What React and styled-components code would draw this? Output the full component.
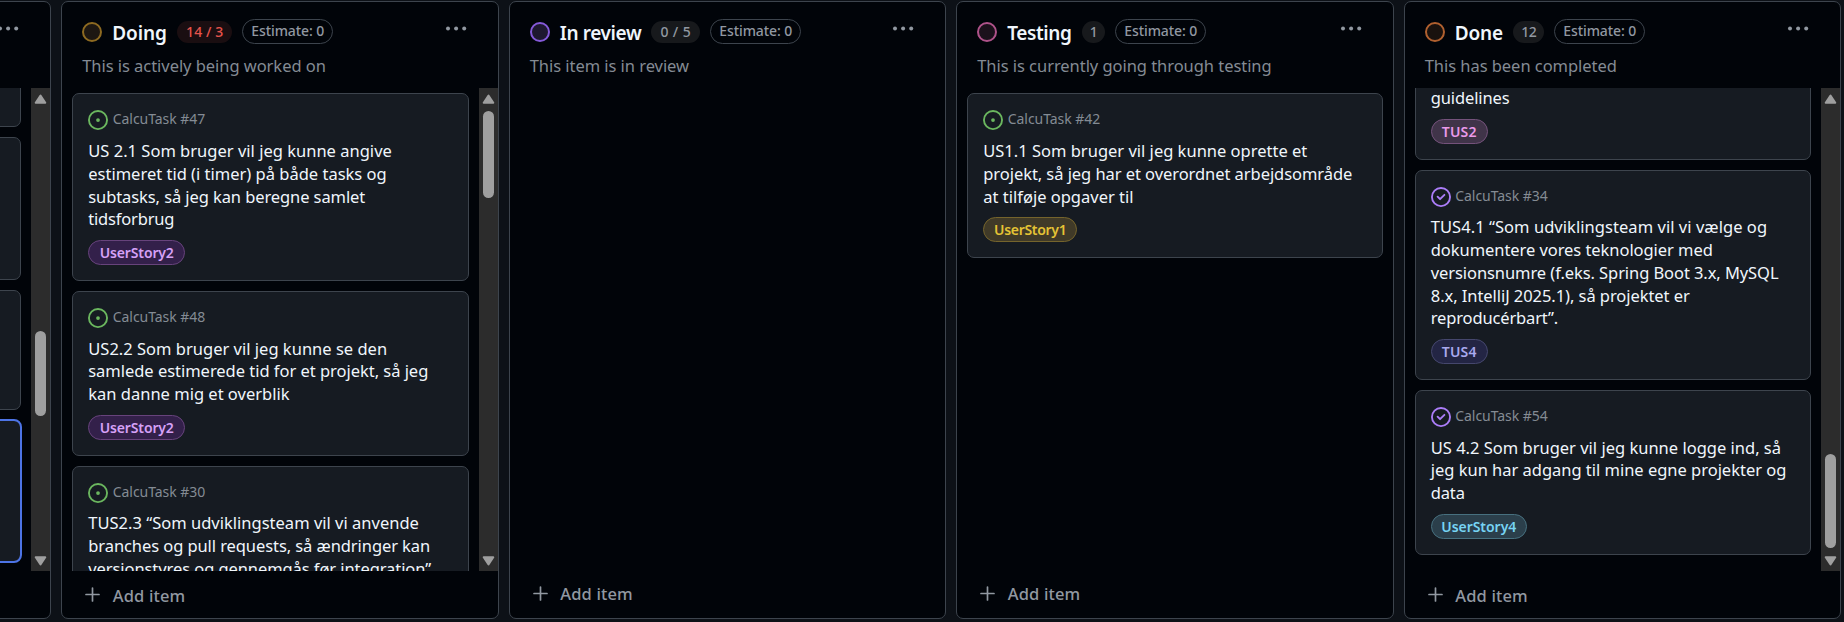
import React from 'react';
import styled, { createGlobalStyle, css } from 'styled-components';

const GlobalStyle = createGlobalStyle`
  * { box-sizing: border-box; }
  html, body { margin: 0; height: 100%; overflow: hidden; background: #0d1117; }
  body { font-family: "Noto Sans", "Open Sans", sans-serif; color: #f0f6fc; }
`;

const Board = styled.main`
  display: flex;
  gap: 10px;
  width: 2300px;
  height: 622px;
  padding: 1px 0 2.6px;
  margin-left: -386.25px;
  overflow: hidden;
`;

const ColumnBox = styled.section`
  display: flex;
  flex-direction: column;
  flex: 0 0 437.5px;
  border: 1px solid #3d444d;
  border-radius: 7px;
  background: #010409;
  overflow: hidden;
`;

const Header = styled.header`
  flex: 0 0 86px;
  padding: 17px 31px 0 20px;
`;

const HeadRow = styled.div`
  display: flex;
  align-items: center;
  height: 25px;
`;

const StatusDot = styled.span`
  width: 20px;
  height: 20px;
  margin: 1px 10px 0 0;
  border: 2px solid ${(p) => p.$ring};
  border-radius: 50%;
  background: ${(p) => p.$fill};
`;

const Title = styled.h2`
  margin: 3px 10px 0 0;
  font-size: 19px;
  font-weight: 600;
  line-height: 26px;
  letter-spacing: ${(p) => p.$track}px;
  width: ${(p) => p.$w}px;
  white-space: nowrap;
`;

const Count = styled.span`
  height: 22px;
  width: ${(p) => p.$w}px;
  margin-right: 10px;
  border-radius: 11px;
  text-align: center;
  font-size: 14px;
  font-weight: 500;
  line-height: 21px;
  letter-spacing: ${(p) => p.$track}px;
  white-space: nowrap;
  color: ${(p) => (p.$over ? '#e5534b' : '#9198a1')};
  background: ${(p) => (p.$over ? '#1a0e11' : '#17191c')};
`;

const Estimate = styled.span`
  height: 25px;
  width: 91px;
  border: 1px solid #3d444d;
  border-radius: 13px;
  text-align: center;
  font-size: 14px;
  font-weight: 500;
  line-height: 22px;
  letter-spacing: -0.1px;
  white-space: nowrap;
  color: #9198a1;
`;

const Menu = styled.svg`
  width: 22px;
  height: 5px;
  margin: -7px 0 0 auto;
  fill: #9198a1;
`;

const Description = styled.p`
  margin: 9.5px 0 0;
  font-size: 16.5px;
  line-height: 23px;
  letter-spacing: -0.05px;
  white-space: nowrap;
  color: #848b94;
`;

const Body = styled.div`
  display: flex;
  flex: 0 0 482.75px;
  overflow: hidden;
`;

const List = styled.div`
  flex: 1;
  display: flex;
  flex-direction: column;
  gap: 10px;
  padding: 5.25px 10px 0;
  overflow: hidden;
`;

const CardBox = styled.article`
  flex: none;
  height: ${(p) => (p.$h ? `${p.$h}px` : 'auto')};
  margin-top: ${(p) => p.$lift || 0}px;
  padding: 15px;
  border: 1px solid #3d444d;
  border-radius: 7px;
  background: #161b22;
  ${(p) => p.$selected && css`
    outline: 2px solid #4d74e6;
    outline-offset: -1px;
  `}
`;

const Repo = styled.div`
  display: flex;
  align-items: center;
  gap: 4.5px;
  height: 20px;
  margin-bottom: 10.75px;
  font-size: 14px;
  letter-spacing: -0.05px;
  color: #848b94;
`;

const RepoName = styled.span`
  margin-top: -1px;
`;

const IssueIcon = styled.svg`
  width: 20px;
  height: 20px;
  margin-top: 2px;
  flex: none;
  fill: ${(p) => p.$color};
`;

const Line = styled.div`
  font-size: 16.5px;
  line-height: 22.75px;
  letter-spacing: ${(p) => p.$track}px;
  white-space: nowrap;
`;

const tones = {
  purple: { text: '#d6a1f7', bg: '#33204a', line: '#67437c' },
  pink: { text: '#ea9aea', bg: '#403449', line: '#74527b' },
  yellow: { text: '#e5c335', bg: '#403a28', line: '#75642c' },
  indigo: { text: '#a9a9ee', bg: '#232544', line: '#45476d' },
  cyan: { text: '#77d4f4', bg: '#2b3f4b', line: '#47707f' },
};

const Label = styled.span`
  display: block;
  width: ${(p) => p.$w}px;
  height: 25px;
  margin-top: 8.75px;
  border: 1px solid ${(p) => tones[p.$tone].line};
  border-radius: 13px;
  text-align: center;
  font-size: 14px;
  font-weight: 600;
  line-height: 24.5px;
  letter-spacing: ${(p) => p.$track}px;
  white-space: nowrap;
  color: ${(p) => tones[p.$tone].text};
  background: ${(p) => tones[p.$tone].bg};
`;

const Track = styled.div`
  display: flex;
  flex-direction: column;
  align-items: center;
  flex: 0 0 19px;
  padding: 6px 0 5px;
  background: #2c2c2c;
`;

const Arrow = styled.svg`
  width: 13px;
  height: 10px;
  flex: none;
  fill: #9f9f9f;
  stroke: #9f9f9f;
  stroke-width: 2;
  stroke-linejoin: round;
`;

const Thumb = styled.div`
  width: 11px;
  height: ${(p) => p.$size}px;
  margin: ${(p) => p.$offset - 16}px 0 auto;
  border-radius: 6px;
  background: #9f9f9f;
`;

const AddItem = styled.footer`
  display: flex;
  align-items: center;
  gap: 12.5px;
  height: 28px;
  margin-top: ${(p) => (p.$raised ? 9 : 10.25)}px;
  padding-left: 23px;
  font-size: 16.5px;
  font-weight: 500;
  letter-spacing: 0.15px;
  color: #9198a1;
`;

const Plus = styled.svg`
  width: 15px;
  height: 15px;
  margin-top: -1px;
  flex: none;
  stroke: #9198a1;
  stroke-width: 1.7;
  stroke-linecap: round;
`;

const AddText = styled.span`
  line-height: 22px;
  margin-top: 1px;
`;

const columns = [
  {
    title: '',
    scroll: [242.7, 85.5],
    cards: [
      { h: 100, lift: -66.5 },
      { h: 143 },
      { h: 120 },
      { h: 142.5, selected: true },
    ],
  },
  {
    title: 'Doing', titleW: 55, track: -0.1, ring: '#8d6a21', fill: '#1d1712',
    count: '14 / 3', over: true, countW: 55, countTrack: 0.1,
    text: 'This is actively being worked on',
    scroll: [23, 87],
    cards: [
      {
        id: 47, label: ['UserStory2', 97, 'purple', -0.14],
        lines: [
          ['US 2.1 Som bruger vil jeg kunne angive', 0.01],
          ['estimeret tid (i timer) på både tasks og', 0],
          ['subtasks, så jeg kan beregne samlet', -0.09],
          ['tidsforbrug', -0.18],
        ],
      },
      {
        id: 48, label: ['UserStory2', 97, 'purple', -0.14],
        lines: [
          ['US2.2 Som bruger vil jeg kunne se den', 0.01],
          ['samlede estimerede tid for et projekt, så jeg', -0.03],
          ['kan danne mig et overblik', 0],
        ],
      },
      {
        id: 30,
        lines: [
          ['TUS2.3 “Som udviklingsteam vil vi anvende', 0.01],
          ['branches og pull requests, så ændringer kan', -0.08],
          ['versionstyres og gennemgås før integration”', -0.08],
        ],
      },
    ],
  },
  {
    title: 'In review', titleW: 81.5, track: -0.37, ring: '#8459d8', fill: '#1e1830',
    count: '0 / 5', countW: 49, countTrack: 0.4, raised: true,
    text: 'This item is in review',
    cards: [],
  },
  {
    title: 'Testing', titleW: 65, track: -0.4, ring: '#ae5289', fill: '#1b111b',
    count: '1', countW: 23, countTrack: 0, raised: true,
    text: 'This is currently going through testing',
    cards: [
      {
        id: 42, label: ['UserStory1', 94, 'yellow', -0.3],
        lines: [
          ['US1.1 Som bruger vil jeg kunne oprette et', 0],
          ['projekt, så jeg har et overordnet arbejdsområde', -0.06],
          ['at tilføje opgaver til', 0],
        ],
      },
    ],
  },
  {
    title: 'Done', titleW: 48.5, track: -0.15, ring: '#b0602f', fill: '#19120e',
    count: '12', countW: 31, countTrack: -0.5,
    text: 'This has been completed',
    scroll: [365.7, 94.5],
    cards: [
      {
        done: true, lift: -22.25, label: ['TUS2', 57, 'pink', 0.2],
        lines: [['guidelines', -0.12]],
      },
      {
        id: 34, done: true, label: ['TUS4', 57, 'indigo', 0.2],
        lines: [
          ['TUS4.1 “Som udviklingsteam vil vi vælge og', 0.05],
          ['dokumentere vores teknologier med', -0.06],
          ['versionsnumre (f.eks. Spring Boot 3.x, MySQL', -0.08],
          ['8.x, IntelliJ 2025.1), så projektet er', -0.06],
          ['reproducérbart”.', -0.15],
        ],
      },
      {
        id: 54, done: true, label: ['UserStory4', 96, 'cyan', -0.04],
        lines: [
          ['US 4.2 Som bruger vil jeg kunne logge ind, så', 0],
          ['jeg kun har adgang til mine egne projekter og', -0.02],
          ['data', -0.15],
        ],
      },
    ],
  },
];

function StateIcon({ done }) {
  return done ? (
    <IssueIcon viewBox="0 0 16 16" $color="#ab7df8">
      <path d="M11.28 6.78a.75.75 0 0 0-1.06-1.06L7.25 8.69 5.78 7.22a.75.75 0 0 0-1.06 1.06l2 2a.75.75 0 0 0 1.06 0l3.5-3.5Z" />
      <path d="M16 8A8 8 0 1 1 0 8a8 8 0 0 1 16 0Zm-1.5 0a6.5 6.5 0 1 0-13 0 6.5 6.5 0 0 0 13 0Z" />
    </IssueIcon>
  ) : (
    <IssueIcon viewBox="0 0 16 16" $color="#6bb75f">
      <path d="M8 9.5a1.5 1.5 0 1 0 0-3 1.5 1.5 0 0 0 0 3Z" />
      <path d="M8 0a8 8 0 1 1 0 16A8 8 0 0 1 8 0ZM1.5 8a6.5 6.5 0 1 0 13 0 6.5 6.5 0 0 0-13 0Z" />
    </IssueIcon>
  );
}

function Card({ card }) {
  return (
    <CardBox $h={card.h} $lift={card.lift} $selected={card.selected}>
      {card.id && (
        <Repo>
          <StateIcon done={card.done} />
          <RepoName>CalcuTask #{card.id}</RepoName>
        </Repo>
      )}
      {card.lines && card.lines.map(([text, track]) => (
        <Line key={text} $track={track}>{text}</Line>
      ))}
      {card.label && (
        <Label $w={card.label[1]} $tone={card.label[2]} $track={card.label[3]}>
          {card.label[0]}
        </Label>
      )}
    </CardBox>
  );
}

function Scrollbar({ offset, size }) {
  return (
    <Track>
      <Arrow viewBox="0 0 13 10"><path d="M6.5 1.6 L11.3 8.7 H1.7 Z" /></Arrow>
      <Thumb $offset={offset} $size={size} />
      <Arrow viewBox="0 0 13 10"><path d="M6.5 8.4 L11.3 1.3 H1.7 Z" /></Arrow>
    </Track>
  );
}

function Column({ col }) {
  return (
    <ColumnBox>
      <Header>
        <HeadRow>
          {col.title && (
            <>
              <StatusDot $ring={col.ring} $fill={col.fill} />
              <Title $track={col.track} $w={col.titleW}>{col.title}</Title>
              <Count $w={col.countW} $track={col.countTrack} $over={col.over}>{col.count}</Count>
              <Estimate>Estimate: 0</Estimate>
            </>
          )}
          <Menu viewBox="0 0 22 5">
            <circle cx="3" cy="2.5" r="2" />
            <circle cx="11.1" cy="2.5" r="2" />
            <circle cx="19.2" cy="2.5" r="2" />
          </Menu>
        </HeadRow>
        <Description>{col.text}</Description>
      </Header>
      <Body>
        <List>
          {col.cards.map((card, i) => <Card key={i} card={card} />)}
        </List>
        {col.scroll && <Scrollbar offset={col.scroll[0]} size={col.scroll[1]} />}
      </Body>
      {col.title && (
        <AddItem $raised={col.raised}>
          <Plus viewBox="0 0 15 15"><path d="M7.5 1v13M1 7.5h13" /></Plus>
          <AddText>Add item</AddText>
        </AddItem>
      )}
    </ColumnBox>
  );
}

export default function App() {
  return (
    <>
      <GlobalStyle />
      <Board>
        {columns.map((col, i) => <Column key={i} col={col} />)}
      </Board>
    </>
  );
}
